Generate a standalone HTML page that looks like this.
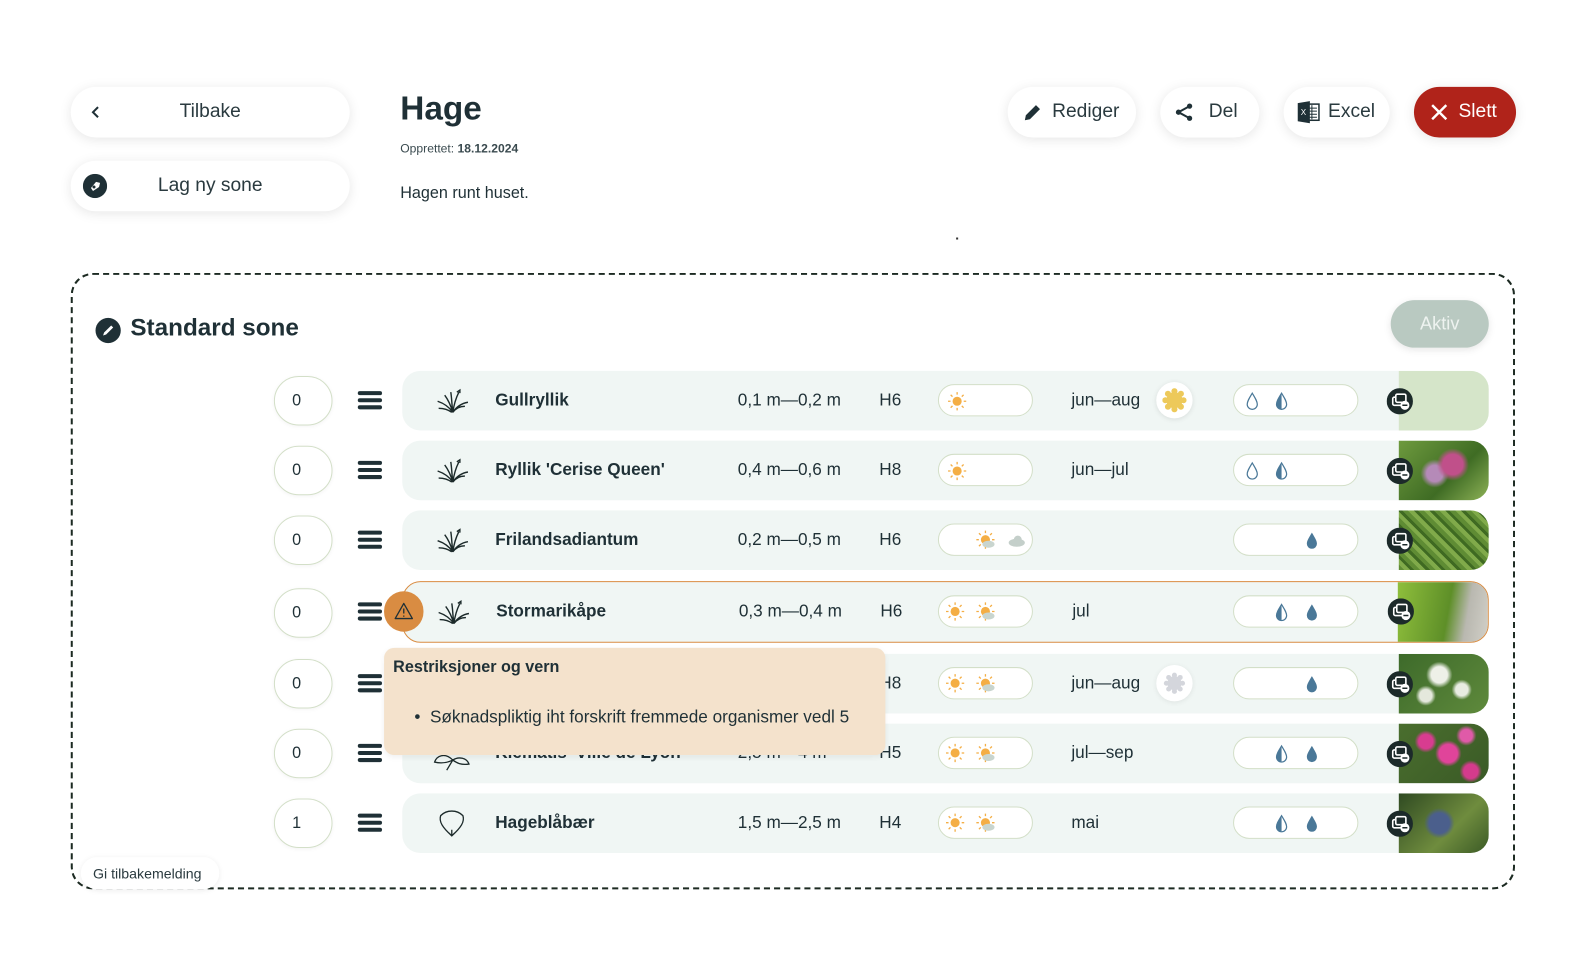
<!DOCTYPE html>
<html><head><meta charset="utf-8">
<style>
*{box-sizing:border-box;margin:0;padding:0}
html{width:1585px;height:980px;overflow:hidden}
body{width:1585px;height:980px;background:#fff;font-family:"Liberation Sans",sans-serif;color:#1f3036;position:relative;overflow:hidden}
#w{position:absolute;left:0;top:0;width:1585px;height:980px;transform:scale(1.0107);transform-origin:0 0}
.abs{position:absolute}
.btn{position:absolute;background:#fff;border-radius:26px;box-shadow:0 2px 12px rgba(0,0,0,.10);display:flex;align-items:center;font-size:19px;color:#2a3a3f}
.row{position:absolute;left:398px;width:1075px;height:59px;background:#f0f6f4;border-radius:18px;overflow:hidden}
.cnt{position:absolute;left:271px;width:58px;height:49px;border:1px solid #d3dfc8;border-radius:25px;background:#fff;font-size:16px;padding-left:17px;line-height:47px;box-shadow:0 1px 4px rgba(0,0,0,.05)}
.ham{position:absolute;left:354px;width:24px}
.ham i{display:block;height:4px;background:#1f3036;border-radius:2px;margin-bottom:3px}
.t{position:absolute;font-size:17px;top:19px}
.name{left:92px;font-weight:bold}
.size{left:332px}
.h{left:472px}
.pill{position:absolute;top:13px;height:32px;background:#fff;border:1px solid #d3dfc8;border-radius:16px}
.mon{left:662px}
.img{position:absolute;right:0;top:0;width:89px;height:59px}
.ic{position:absolute;left:974px;width:26px;height:26px}
</style></head><body><div id="w">

<div class="btn" style="left:70px;top:86px;width:276px;height:50px;justify-content:center">Tilbake
<svg class="abs" style="left:20px;top:18px" width="10" height="14" viewBox="0 0 10 14"><path d="M7 2L2 7l5 5" stroke="#1f3036" stroke-width="2" fill="none"/></svg></div>
<div class="btn" style="left:70px;top:159px;width:276px;height:50px;justify-content:center">Lag ny sone
<svg class="abs" style="left:12px;top:13px" width="24" height="24" viewBox="0 0 24 24"><circle cx="12" cy="12" r="12" fill="#1f3036"/><path d="M8 14l5-6 4 1-1 4-6 4z" fill="#fff"/><circle cx="11" cy="13" r="1.5" fill="#1f3036"/></svg></div>

<div class="abs" style="left:396px;top:88px;font-size:33px;font-weight:bold;color:#1f3036">Hage</div>
<div class="abs" style="left:396px;top:140px;font-size:12px;color:#3a4a4f">Opprettet: <b>18.12.2024</b></div>
<div class="abs" style="left:396px;top:183px;font-size:16px">Hagen runt huset.</div>
<div class="abs" style="left:946px;top:235px;width:2px;height:2px;background:#333"></div>

<div class="btn" style="left:997px;top:86px;width:127px;height:50px;padding-left:44px">Rediger
<svg class="abs" style="left:15px;top:15px" width="20" height="20" viewBox="0 0 20 20"><path d="M2 18l1-5L13 3l4 4L7 17z" fill="#1f3036"/></svg></div>
<div class="btn" style="left:1148px;top:86px;width:98px;height:50px;padding-left:48px">Del
<svg class="abs" style="left:14px;top:15px" width="20" height="20" viewBox="0 0 20 20"><circle cx="15" cy="4" r="2.6" fill="#1f3036"/><circle cx="4" cy="10" r="2.6" fill="#1f3036"/><circle cx="15" cy="16" r="2.6" fill="#1f3036"/><path d="M15 4L4 10l11 6" stroke="#1f3036" stroke-width="2" fill="none"/></svg></div>
<div class="btn" style="left:1270px;top:86px;width:105px;height:50px;padding-left:44px">Excel
<svg class="abs" style="left:13px;top:13px" width="24" height="24" viewBox="0 0 24 24"><rect x="9" y="4" width="13" height="16" fill="#fff" stroke="#1f3036" stroke-width="1.5"/><path d="M12 8h8M12 11h8M12 14h8M12 17h8M15 5v14" stroke="#1f3036" stroke-width="1"/><path d="M1 3l12-2v22L1 21z" fill="#1f3036"/><text x="4" y="15" font-size="8" fill="#fff" font-family="Liberation Sans">X</text></svg></div>
<div class="btn" style="left:1399px;top:86px;width:101px;height:50px;padding-left:44px;background:#b0231a;color:#fff">Slett
<svg class="abs" style="left:16px;top:16px" width="18" height="18" viewBox="0 0 18 18"><path d="M2 2l14 14M16 2L2 16" stroke="#fff" stroke-width="2.4"/></svg></div>

<div class="abs" style="left:70px;top:270px;width:1429px;height:610px;border:2px dashed #1c2a22;border-radius:22px"></div>
<svg class="abs" style="left:94px;top:314px" width="26" height="26" viewBox="0 0 26 26"><circle cx="13" cy="13" r="12.5" fill="#1f3036"/><path d="M8 18l1-3 7-7 2 2-7 7z" fill="#fff"/></svg>
<div class="abs" style="left:129px;top:311px;font-size:24px;font-weight:bold">Standard sone</div>
<div class="abs" style="left:1376px;top:297px;width:97px;height:47px;border-radius:24px;background:#b9c9c1;color:#eef3f0;font-size:18px;text-align:center;line-height:47px;box-shadow:0 2px 8px rgba(0,0,0,.1)">Aktiv</div>

<svg width="0" height="0" style="position:absolute;left:0;top:0">
<defs>
<g id="sun"><circle cx="0" cy="0" r="4.5" fill="#f4ae45"/><g stroke="#f4ae45" stroke-width="1.3"><path d="M0-9v2.5M0 9v-2.5M-9 0h2.5M9 0h-2.5M-6.4-6.4l1.8 1.8M6.4 6.4l-1.8-1.8M-6.4 6.4l1.8-1.8M6.4-6.4l-1.8 1.8"/></g></g>
<g id="psun"><use href="#sun"/><ellipse cx="3" cy="4.5" rx="6" ry="3.5" fill="#c9d5cf"/></g>
<g id="cloud"><ellipse cx="0" cy="2" rx="8" ry="4" fill="#c4cfca"/><circle cx="1" cy="-1" r="4" fill="#c4cfca"/></g>
<g id="drop0"><path d="M0-8C3-3 5 0 5 3a5 5 0 0 1-10 0c0-3 2-6 5-11z" fill="none" stroke="#4a7898" stroke-width="1.2"/></g>
<g id="drop1"><path d="M0-8C3-3 5 0 5 3a5 5 0 0 1-10 0c0-3 2-6 5-11z" fill="none" stroke="#4a7898" stroke-width="1.2"/><path d="M0-8C-3-3-5 0-5 3a5 5 0 0 0 5 5z" fill="#4a7898"/></g>
<g id="drop2"><path d="M0-8C3-3 5 0 5 3a5 5 0 0 1-10 0c0-3 2-6 5-11z" fill="#4a7898"/></g>
<g id="grass" fill="none" stroke="#1c2a2a" stroke-width="1.4"><path d="M0 11C-2 4-5-2-8-6M0 11C-4 5-9 2-15 0M0 11C-1 3-1-3-2-9M0 11C1 4 3-3 6-9M0 11C4 5 9 2 15 1M0 11C3 7 7 5 12 5M-1 11C-5 8-10 7-14 7"/><path d="M4-9l3-2 0 3"/></g>
<g id="icn"><circle cx="13" cy="13" r="13" fill="#1c2a2a"/><rect x="6" y="9" width="10" height="8" rx="1.5" fill="none" stroke="#fff" stroke-width="1.6"/><rect x="9" y="6" width="10" height="8" rx="1.5" fill="#1c2a2a" stroke="#fff" stroke-width="1.6"/><circle cx="18" cy="17" r="4.5" fill="#fff"/><path d="M15.5 17h5" stroke="#1c2a2a" stroke-width="1.5"/></g>
</defs></svg>

<div class="cnt" style="top:372px">0</div><div class="ham" style="top:387px"><i></i><i></i><i></i></div>
<div class="row" style="top:367px">
 <svg class="abs" style="left:34px;top:16px" width="32" height="28" viewBox="-16 -14 32 28"><use href="#grass"/></svg>
 <div class="t name">Gullryllik</div><div class="t size">0,1 m—0,2 m</div><div class="t h">H6</div>
 <div class="pill" style="left:530px;width:94px"><svg class="abs" style="left:3px;top:3px" width="30" height="26" viewBox="-15 -13 30 26"><use href="#sun"/></svg></div>
 <div class="t mon">jun—aug</div>
 <div class="abs" style="left:746px;top:11px;width:36px;height:36px;border-radius:18px;background:#fff;box-shadow:0 1px 5px rgba(0,0,0,.1)"><svg class="abs" style="left:6px;top:6px" width="24" height="24" viewBox="-12 -12 24 24"><circle r="8" fill="#edc95a"/><g fill="#edc95a"><circle cx="0" cy="-9" r="3"/><circle cx="0" cy="9" r="3"/><circle cx="9" cy="0" r="3"/><circle cx="-9" cy="0" r="3"/><circle cx="6.4" cy="6.4" r="3"/><circle cx="-6.4" cy="6.4" r="3"/><circle cx="6.4" cy="-6.4" r="3"/><circle cx="-6.4" cy="-6.4" r="3"/></g></svg></div>
 <div class="pill" style="left:822px;width:124px"><svg class="abs" style="left:0;top:0" width="124" height="32"><use href="#drop0" x="18" y="16"/><use href="#drop1" x="47" y="16"/></svg></div>
 <div class="img" style="background:#d5e5c9"></div>
 <svg class="ic" style="top:17px"><use href="#icn"/></svg>
</div>

<div class="cnt" style="top:441px">0</div><div class="ham" style="top:456px"><i></i><i></i><i></i></div>
<div class="row" style="top:436px">
 <svg class="abs" style="left:34px;top:16px" width="32" height="28" viewBox="-16 -14 32 28"><use href="#grass"/></svg>
 <div class="t name">Ryllik 'Cerise Queen'</div><div class="t size">0,4 m—0,6 m</div><div class="t h">H8</div>
 <div class="pill" style="left:530px;width:94px"><svg class="abs" style="left:3px;top:3px" width="30" height="26" viewBox="-15 -13 30 26"><use href="#sun"/></svg></div>
 <div class="t mon">jun—jul</div>
 <div class="pill" style="left:822px;width:124px"><svg class="abs" width="124" height="32"><use href="#drop0" x="18" y="16"/><use href="#drop1" x="47" y="16"/></svg></div>
 <div class="img" style="background:radial-gradient(circle at 60% 40%,#c0508a 0 10px,transparent 16px),radial-gradient(circle at 40% 55%,#b58ab8 0 8px,transparent 14px),linear-gradient(135deg,#6e9a3e,#3f6c24 60%,#8eb257)"></div>
 <svg class="ic" style="top:17px"><use href="#icn"/></svg>
</div>

<div class="cnt" style="top:510px">0</div><div class="ham" style="top:525px"><i></i><i></i><i></i></div>
<div class="row" style="top:505px">
 <svg class="abs" style="left:34px;top:16px" width="32" height="28" viewBox="-16 -14 32 28"><use href="#grass"/></svg>
 <div class="t name">Frilandsadiantum</div><div class="t size">0,2 m—0,5 m</div><div class="t h">H6</div>
 <div class="pill" style="left:530px;width:94px"><svg class="abs" width="94" height="32"><use href="#psun" x="46" y="15"/><use href="#cloud" x="77" y="16"/></svg></div>
 <div class="pill" style="left:822px;width:124px"><svg class="abs" width="124" height="32"><use href="#drop2" x="77" y="16"/></svg></div>
 <div class="img" style="background:repeating-linear-gradient(45deg,#5f8c34 0 4px,#80aa4a 4px 8px,#3f6a22 8px 11px)"></div>
 <svg class="ic" style="top:17px"><use href="#icn"/></svg>
</div>

<div class="cnt" style="top:582px">0</div><div class="ham" style="top:596px"><i></i><i></i><i></i></div>
<div class="row" style="top:575px;height:61px;border:1.5px solid #d98c42">
 <svg class="abs" style="left:34px;top:16px" width="32" height="28" viewBox="-16 -14 32 28"><use href="#grass"/></svg>
 <div class="t name">Stormarikåpe</div><div class="t size">0,3 m—0,4 m</div><div class="t h">H6</div>
 <div class="pill" style="left:529px;width:94px"><svg class="abs" width="94" height="32"><use href="#sun" x="16" y="15"/><use href="#psun" x="46" y="15"/></svg></div>
 <div class="t mon">jul</div>
 <div class="pill" style="left:821px;width:124px"><svg class="abs" width="124" height="32"><use href="#drop1" x="47" y="16"/><use href="#drop2" x="77" y="16"/></svg></div>
 <div class="img" style="height:61px;background:linear-gradient(100deg,#8fbf3c,#5e8f28 55%,#b9b8b0 75%,#d2d0c8)"></div>
 <svg class="ic" style="top:16px"><use href="#icn"/></svg>
</div>
<div class="abs" style="left:380px;top:585px;width:39px;height:40px;border-radius:20px;background:#d98c42"><svg class="abs" style="left:9px;top:10px" width="21" height="19" viewBox="0 0 21 19"><path d="M10.5 2L19 17H2z" fill="none" stroke="#1f3036" stroke-width="1.3" stroke-linejoin="round"/><path d="M10.5 7v5M10.5 14v1.2" stroke="#1f3036" stroke-width="1.3"/></svg></div>

<div class="cnt" style="top:652px">0</div><div class="ham" style="top:667px"><i></i><i></i><i></i></div>
<div class="row" style="top:647px">
 <div class="t h">H8</div>
 <div class="pill" style="left:530px;width:94px"><svg class="abs" width="94" height="32"><use href="#sun" x="16" y="15"/><use href="#psun" x="46" y="15"/></svg></div>
 <div class="t mon">jun—aug</div>
 <div class="abs" style="left:746px;top:11px;width:36px;height:36px;border-radius:18px;background:#fff;box-shadow:0 1px 5px rgba(0,0,0,.08)"><svg class="abs" style="left:7px;top:7px" width="22" height="22" viewBox="-11 -11 22 22"><circle r="7" fill="#d4d6dc"/><g fill="#d4d6dc"><circle cx="0" cy="-8" r="2.5"/><circle cx="0" cy="8" r="2.5"/><circle cx="8" cy="0" r="2.5"/><circle cx="-8" cy="0" r="2.5"/><circle cx="5.7" cy="5.7" r="2.5"/><circle cx="-5.7" cy="5.7" r="2.5"/><circle cx="5.7" cy="-5.7" r="2.5"/><circle cx="-5.7" cy="-5.7" r="2.5"/></g></svg></div>
 <div class="pill" style="left:822px;width:124px"><svg class="abs" width="124" height="32"><use href="#drop2" x="77" y="16"/></svg></div>
 <div class="img" style="background:radial-gradient(circle at 45% 35%,#eef0e8 0 8px,transparent 13px),radial-gradient(circle at 30% 70%,#e4e8dc 0 6px,transparent 10px),radial-gradient(circle at 70% 60%,#e8ece2 0 6px,transparent 10px),linear-gradient(135deg,#3d6a2a,#5f8a3c)"></div>
 <svg class="ic" style="top:17px"><use href="#icn"/></svg>
</div>

<div class="cnt" style="top:721px">0</div><div class="ham" style="top:736px"><i></i><i></i><i></i></div>
<div class="row" style="top:716px">
 <svg class="abs" style="left:30px;top:18px" width="40" height="30" viewBox="0 0 40 30"><path d="M20 18C12 10 4 14 2 20c8 2 14 0 18-2zM20 18c6-4 14-2 16 4-8 1-12-1-16-4zM20 18l-6 10" fill="none" stroke="#1c2a2a" stroke-width="1.3"/></svg>
 <div class="t name">Klematis 'Ville de Lyon'</div><div class="t size">2,5 m—4 m</div><div class="t h">H5</div>
 <div class="pill" style="left:530px;width:94px"><svg class="abs" width="94" height="32"><use href="#sun" x="16" y="15"/><use href="#psun" x="46" y="15"/></svg></div>
 <div class="t mon">jul—sep</div>
 <div class="pill" style="left:822px;width:124px"><svg class="abs" width="124" height="32"><use href="#drop1" x="47" y="16"/><use href="#drop2" x="77" y="16"/></svg></div>
 <div class="img" style="background:radial-gradient(circle at 55% 50%,#e0449a 0 9px,transparent 13px),radial-gradient(circle at 30% 30%,#d83c90 0 7px,transparent 11px),radial-gradient(circle at 75% 20%,#e05aa8 0 6px,transparent 10px),radial-gradient(circle at 80% 80%,#d43b8c 0 7px,transparent 11px),linear-gradient(135deg,#4a6e2e,#3a5a26)"></div>
 <svg class="ic" style="top:17px"><use href="#icn"/></svg>
</div>

<div class="cnt" style="top:790px">1</div><div class="ham" style="top:805px"><i></i><i></i><i></i></div>
<div class="row" style="top:785px">
 <svg class="abs" style="left:34px;top:14px" width="30" height="32" viewBox="0 0 30 32"><path d="M15 28C6 20 2 14 4 8c6-6 16-6 22 0 2 6-2 12-11 20zM15 28v-6M12 25l3 3 3-3" fill="none" stroke="#1c2a2a" stroke-width="1.3"/></svg>
 <div class="t name">Hageblåbær</div><div class="t size">1,5 m—2,5 m</div><div class="t h">H4</div>
 <div class="pill" style="left:530px;width:94px"><svg class="abs" width="94" height="32"><use href="#sun" x="16" y="15"/><use href="#psun" x="46" y="15"/></svg></div>
 <div class="t mon">mai</div>
 <div class="pill" style="left:822px;width:124px"><svg class="abs" width="124" height="32"><use href="#drop1" x="47" y="16"/><use href="#drop2" x="77" y="16"/></svg></div>
 <div class="img" style="background:radial-gradient(circle at 45% 50%,#4b5f8c 0 10px,transparent 15px),linear-gradient(135deg,#2f4a22,#6f8c3e 60%,#3b5a26)"></div>
 <svg class="ic" style="top:17px"><use href="#icn"/></svg>
</div>

<div class="abs" style="left:380px;top:641px;width:496px;height:106px;background:#f4e2cc;border-radius:10px;box-shadow:0 2px 6px rgba(0,0,0,.06)">
 <div class="abs" style="left:9px;top:11px;font-size:16px;font-weight:bold">Restriksjoner og vern</div>
 <div class="abs" style="left:30px;top:59px;font-size:17px">• &nbsp;Søknadspliktig iht forskrift fremmede organismer vedl 5</div>
</div>

<div class="abs" style="left:80px;top:848px;width:137px;height:32px;background:#fff;border-radius:16px;box-shadow:0 1px 6px rgba(0,0,0,.08);font-size:14px;line-height:32px;padding-left:12px;color:#2a3a3f">Gi tilbakemelding</div>

</div></body></html>
